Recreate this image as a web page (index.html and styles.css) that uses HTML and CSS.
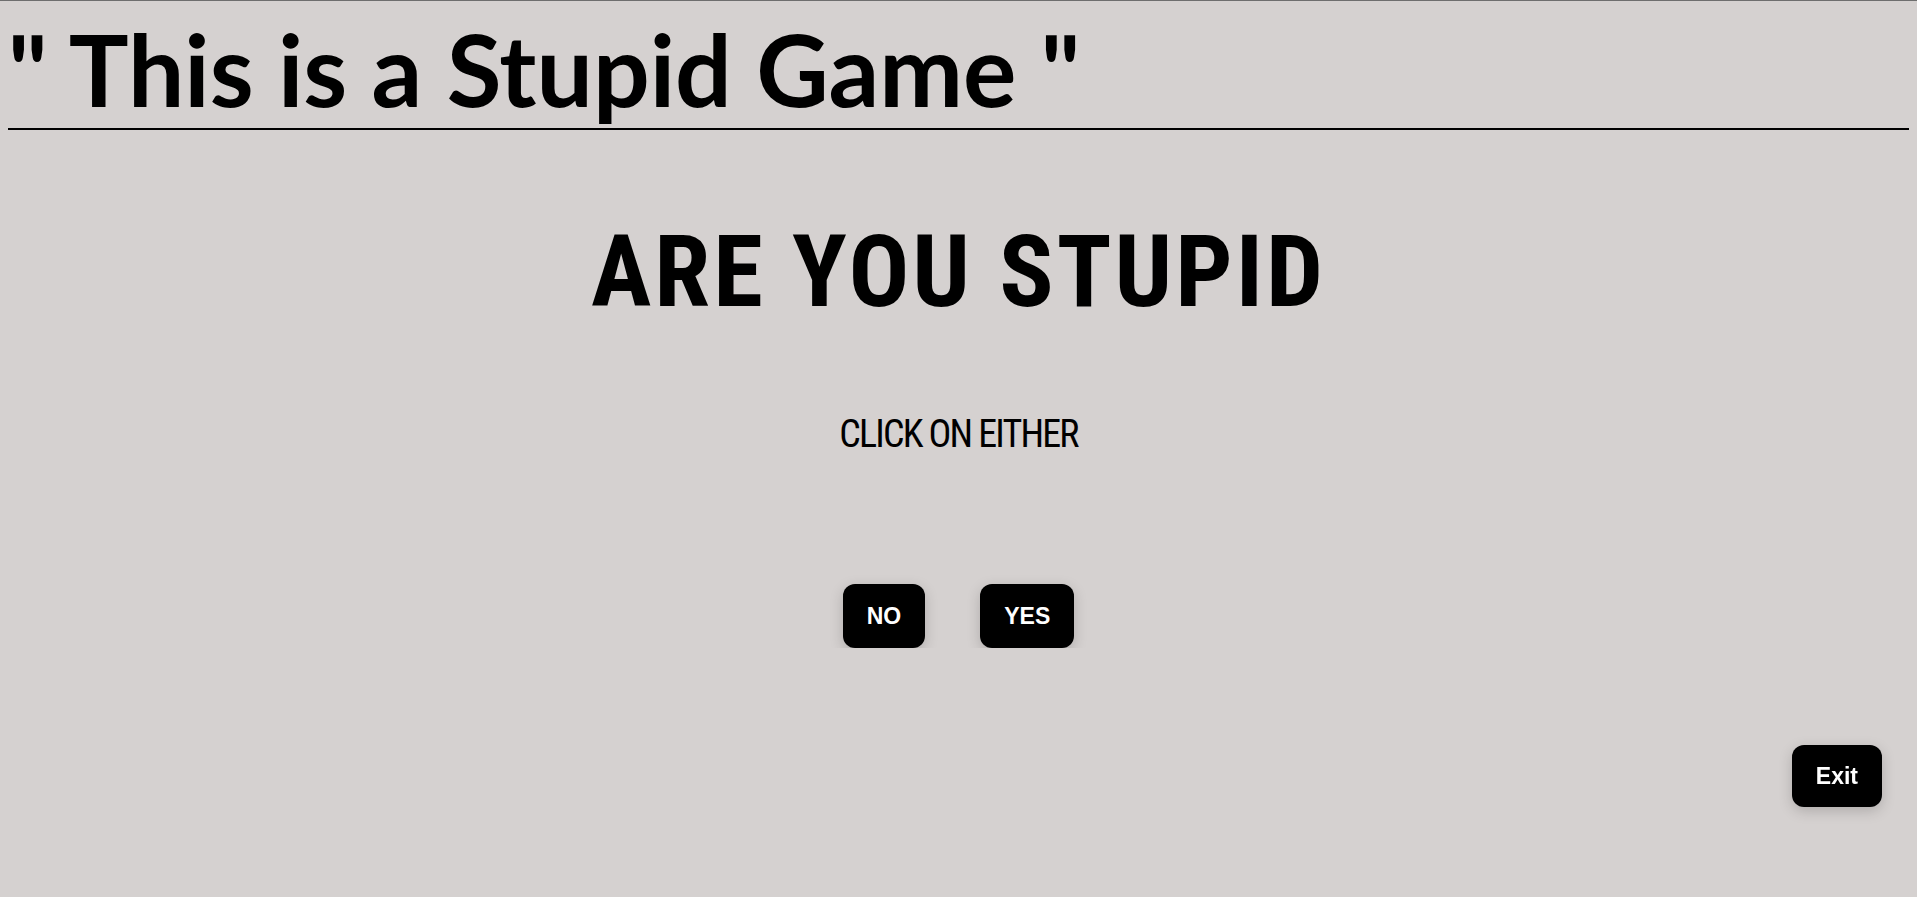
FILE: index.html
```html
<!DOCTYPE html>
<html lang="en">
<head>
<meta charset="utf-8">
<title>This is a Stupid Game</title>
<link rel="stylesheet" href="styles.css">
</head>
<body>
<h1 class="title">" This is a Stupid Game "</h1>
<main class="game">
  <h2 class="question">ARE YOU STUPID</h2>
  <p class="hint">CLICK ON EITHER</p>
  <div class="choices">
    <button class="btn">NO</button>
    <button class="btn">YES</button>
  </div>
</main>
<button class="btn exit">Exit</button>
</body>
</html>
```
FILE: styles.css
```css
html {
  background: #d5d1d0;
  border-top: 1px solid #6e6e6e;
}
body {
  margin: 7px 8px 8px;
  color: #000;
}
.title {
  margin: 0;
  font-family: Lato, "Liberation Sans", sans-serif;
  font-weight: 700;
  font-size: 100px;
  line-height: 120px;
  border-bottom: 2px solid #000;
}
.game {
  display: flex;
  flex-direction: column;
  align-items: center;
}
.question {
  margin: 82px 0 0;
  font-family: "Roboto Condensed", Roboto, sans-serif;
  font-weight: 700;
  font-size: 101px;
  line-height: 120px;
  letter-spacing: 3px;
}
.hint {
  margin: 80px 0 0;
  font-family: "Roboto Condensed", Roboto, sans-serif;
  font-weight: 400;
  font-size: 38px;
  line-height: 44px;
  letter-spacing: -1.8px;
}
.choices {
  display: flex;
  gap: 55px;
  margin-top: 128px;
}
.btn {
  border: 0;
  background: #000;
  color: #fff;
  font-family: "Liberation Sans", Arial, sans-serif;
  font-weight: 700;
  font-size: 23px;
  line-height: 24px;
  padding: 20px 24px;
  border-radius: 12px;
  box-shadow: 0 4px 14px rgba(0, 0, 0, 0.18);
  cursor: pointer;
}
.exit {
  position: fixed;
  right: 35px;
  bottom: 90px;
  padding: 19px 24px;
}
```
